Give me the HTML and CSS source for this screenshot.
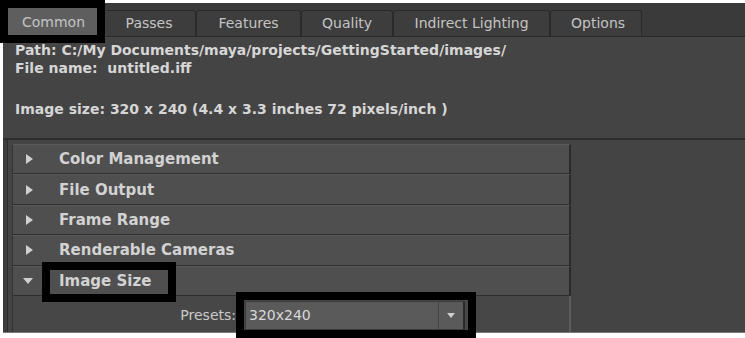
FILE: index.html
```html
<!DOCTYPE html>
<html lang="en">
<head>
    <meta charset="UTF-8" />
    <title>Render Settings</title>
    <link rel="stylesheet" href="styles.css">
</head>
<body>

<div class="app">

    <!-- tabs -->
    <div class="tabs">
        <div class="tab active">Common</div>
        <div class="tab">Passes</div>
        <div class="tab">Features</div>
        <div class="tab">Quality</div>
        <div class="tab">Indirect Lighting</div>
        <div class="tab">Options</div>
    </div>

    <!-- file info -->
    <div class="info">
        <p>Path: C:/My Documents/maya/projects/GettingStarted/images/</p>
        <p>File name:&nbsp; untitled.iff</p>
        <p class="size-line">Image size: 320 x 240 (4.4 x 3.3 inches 72 pixels/inch )</p>
    </div>

    <!-- collapsible frames -->
    <div class="sections">
        <div class="frames">
            <div class="frame"><span class="arrow-right"></span>Color Management</div>
            <div class="frame"><span class="arrow-right"></span>File Output</div>
            <div class="frame"><span class="arrow-right"></span>Frame Range</div>
            <div class="frame"><span class="arrow-right"></span>Renderable Cameras</div>
            <div class="frame open"><span class="arrow-down"></span>Image Size</div>
            <div class="frame-body">
                <div class="field">
                    <label>Presets:</label>
                    <div class="select">
                        <span class="select-value">320x240</span>
                        <span class="select-btn"><span class="arrow-small"></span></span>
                    </div>
                </div>
            </div>
        </div>
    </div>

</div>

<!-- callout boxes -->
<div class="mark mark-tab"></div>
<div class="mark mark-frame"></div>
<div class="mark mark-preset"></div>

</body>
</html>
```

FILE: styles.css
```css
* {
    box-sizing: border-box;
    margin: 0;
    padding: 0;
}

body {
    background: #fff;
    width: 745px;
    height: 338px;
    overflow: hidden;
    position: relative;
    font-family: 'DejaVu Sans', sans-serif;
}

.app {
    margin: 3px 0 0 3px;
    height: 330px;
    background: #444;
    border-bottom: 1px solid #7a7a7a;
    overflow: hidden;
}

/* tabs */
.tabs {
    display: flex;
    align-items: flex-end;
    height: 34px;
    padding-left: 5px;
    background: #3a3a3a;
    border-bottom: 1px solid #2a2a2a;
}
.tab {
    height: 26px;
    line-height: 25px;
    padding: 0 20px;
    font-size: 14px;
    color: #c4c4c4;
    background: #3d3d3d;
    border: 1px solid #2a2a2a;
    border-bottom: none;
    border-radius: 3px 3px 0 0;
    white-space: nowrap;
    text-align: center;
}
.tab.active {
    height: 28px;
    line-height: 27px;
    padding: 0 13px;
    margin-right: 3px;
    background: #5e5e5e;
    border-color: #5e5e5e;
    border-radius: 0;
}
.tab:nth-child(2) { width: 94px; }
.tab:nth-child(3) { width: 105px; }
.tab:nth-child(4) { width: 92px; }
.tab:nth-child(5) { width: 157px; }
.tab:nth-child(6) { width: 92px; }

/* info text */
.info {
    height: 103px;
    padding: 4px 12px 0;
    background: #444;
    border-bottom: 2px solid #2c2c2c;
    font-size: 14px;
    font-weight: bold;
    line-height: 18px;
    color: #d6d6d6;
}
.info .size-line {
    margin-top: 23px;
}

/* frames */
.sections {
    height: 194px;
    border-left: 4px solid #3c3c3c;
}
.frames {
    height: 100%;
    padding: 4px 0 0 4px;
    border-left: 1px solid #2b2b2b;
}
.frame {
    display: flex;
    align-items: center;
    width: 559px;
    height: 30.4px;
    padding-left: 13px;
    background: #4f4f4f;
    border: 1px solid #333;
    border-top-color: #5a5a5a;
    border-right: 2px solid #2a2a2a;
    border-bottom-color: #2e2e2e;
    font-size: 15px;
    font-weight: bold;
    color: #d2d2d2;
}
.arrow-right {
    width: 0;
    height: 0;
    margin-right: 26px;
    border-left: 7px solid #cfcfcf;
    border-top: 5px solid transparent;
    border-bottom: 5px solid transparent;
}
.frame.open {
    padding-left: 10px;
}
.arrow-down {
    width: 0;
    height: 0;
    margin-right: 26px;
    border-top: 6px solid #cfcfcf;
    border-left: 5px solid transparent;
    border-right: 5px solid transparent;
}

.frame-body {
    width: 559px;
    height: 40px;
    padding-top: 5px;
    background: #474747;
    border-left: 1px solid #333;
    border-right: 2px solid #5c5c5c;
}
.field {
    display: flex;
    align-items: center;
}
.field label {
    width: 223px;
    margin-right: 9px;
    text-align: right;
    font-size: 14px;
    color: #cacaca;
}
.select {
    display: flex;
    width: 220px;
    height: 29px;
    background: #5a5a5a;
    border: 1px solid #3a3a3a;
    border-right: 2px solid #2a2a2a;
}
.select-value {
    flex: 1;
    padding-left: 3px;
    line-height: 27px;
    font-size: 14px;
    color: #d8d8d8;
}
.select-btn {
    display: flex;
    align-items: center;
    justify-content: center;
    width: 25px;
    border-left: 1px solid #444;
}
.arrow-small {
    width: 0;
    height: 0;
    border-top: 5px solid #cfcfcf;
    border-left: 4px solid transparent;
    border-right: 4px solid transparent;
}

/* black callout boxes */
.mark {
    position: absolute;
    border: 8px solid #000;
}
.mark-tab {
    left: 0;
    top: 0;
    width: 105px;
    height: 43px;
}
.mark-frame {
    left: 42px;
    top: 262px;
    width: 134px;
    height: 40px;
}
.mark-preset {
    left: 236px;
    top: 292px;
    width: 240px;
    height: 46px;
}
```
